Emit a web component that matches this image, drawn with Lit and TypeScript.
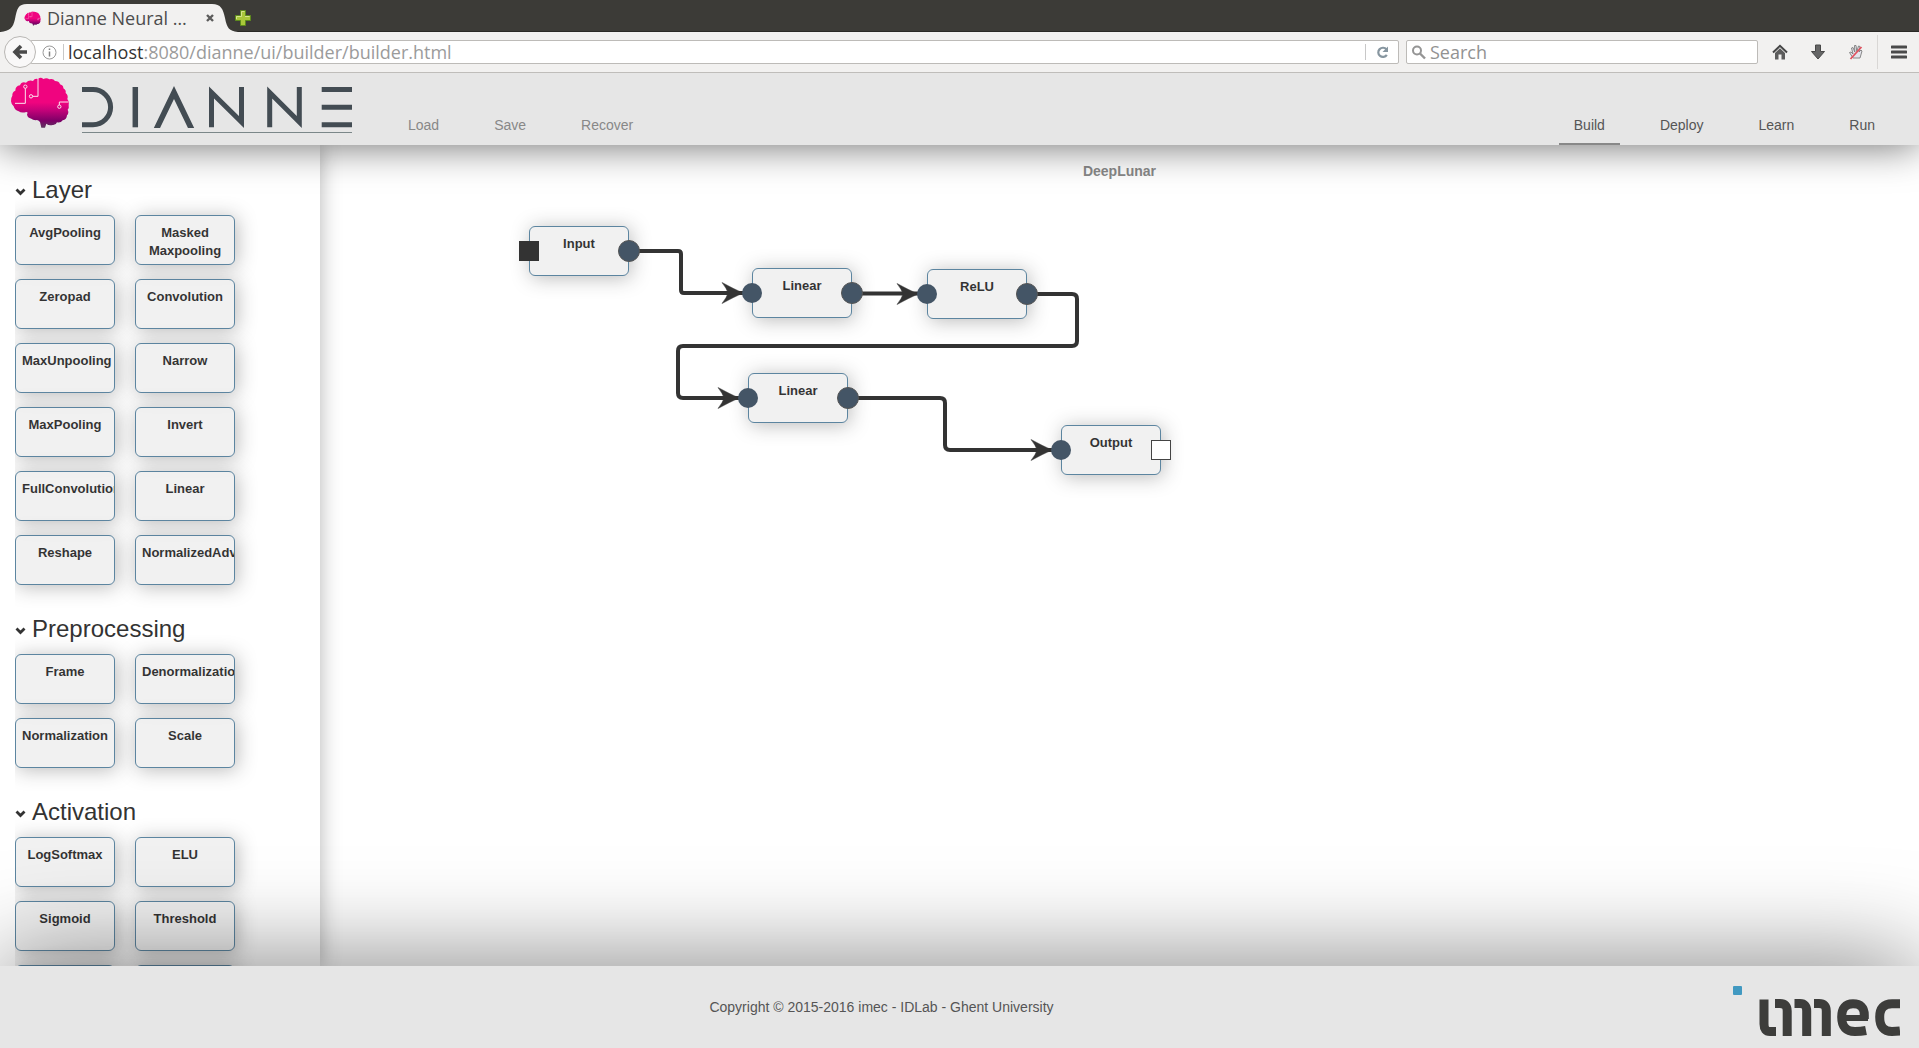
import { LitElement, html, svg, css } from "lit";
import { customElement, property, state } from "lit/decorators.js";
import { classMap } from "lit/directives/class-map.js";
import { styleMap } from "lit/directives/style-map.js";

type Port = "circle" | "source" | "sink";

interface GraphNode {
  label: string;
  x: number;
  y: number;
  input: Port;
  output: Port;
}

const GROUPS: { title: string; items: string[] }[] = [
  {
    title: "Layer",
    items: [
      "AvgPooling", "Masked Maxpooling", "Zeropad", "Convolution", "MaxUnpooling", "Narrow",
      "MaxPooling", "Invert", "FullConvolution", "Linear", "Reshape", "NormalizedAdv",
    ],
  },
  { title: "Preprocessing", items: ["Frame", "Denormalization", "Normalization", "Scale"] },
  { title: "Activation", items: ["LogSoftmax", "ELU", "Sigmoid", "Threshold", "Softmax", "Tanh"] },
];

const NODES: GraphNode[] = [
  { label: "Input", x: 209, y: 81, input: "source", output: "circle" },
  { label: "Linear", x: 432, y: 123, input: "circle", output: "circle" },
  { label: "ReLU", x: 607, y: 124, input: "circle", output: "circle" },
  { label: "Linear", x: 428, y: 228, input: "circle", output: "circle" },
  { label: "Output", x: 741, y: 280, input: "circle", output: "sink" },
];

const WIRES = [
  "M309 106 H358 Q361 106 361 109 V145 Q361 148 364 148 H424",
  "M532 148.500 H599",
  "M707 149 H752 Q757 149 757 154 V196 Q757 201 752 201 H363 Q358 201 358 206 V248 Q358 253 363 253 H420",
  "M528 253 H620 Q625 253 625 258 V300 Q625 305 630 305 H733",
];

const ARROWS: [number, number][] = [[422, 148], [597, 149], [418, 253], [731, 305]];

const BRAIN =
  "M33 94 Q32 84 37 77 Q36 66 46 62 Q46 48 60 46 Q64 34 78 38 Q86 29 99 33 Q104 24 114 27 " +
  "Q122 20 130 27 Q140 22 148 28 Q160 25 165 33 Q177 33 180 43 Q191 46 190 55 Q199 60 197 69 " +
  "Q206 76 202 87 Q209 95 206 104 Q208 113 203 119 Q208 129 201 136 Q200 149 188 151 " +
  "Q182 160 171 157 Q168 166 158 165 Q146 168 139 161 L135 173 H124 L120 156 " +
  "Q113 148 107 151 Q98 150 94 146 Q82 144 81 133 Q85 126 79 126 Q64 130 56 124 Q44 121 41 109 Q34 104 33 94 Z";

const brain = (id: string) => svg`
  <defs>
    <linearGradient id=${id} x1="0" y1="20" x2="0" y2="174" gradientUnits="userSpaceOnUse">
      <stop offset="0.5" stop-color="#f0047f"></stop>
      <stop offset="0.64" stop-color="#c9027a"></stop>
      <stop offset="0.86" stop-color="#7d0067"></stop>
      <stop offset="1" stop-color="#5b3a5e"></stop>
    </linearGradient>
  </defs>
  <path d=${BRAIN} fill="url(#${id})"></path>
  <g fill="none" stroke="#fbe3ee" stroke-width="3">
    <circle cx="76" cy="50" r="5"></circle>
    <path d="M76 55 V100 H45"></path>
    <circle cx="93" cy="79" r="5"></circle>
    <path d="M98 79 H114 V26"></path>
    <circle cx="178" cy="110" r="5"></circle>
    <path d="M178 105 V96 H206"></path>
  </g>`;

@customElement("browser-chrome")
export class BrowserChrome extends LitElement {
  static styles = css`
    :host {
      display: block;
      font-family: "Open Sans", "Noto Sans", sans-serif;
      font-size: 16px;
      color: #4c4c4c;
    }
    button {
      display: grid;
      place-items: center;
      padding: 0;
      border: 0;
      background: none;
      color: inherit;
      font: inherit;
    }
    svg {
      display: block;
    }
    .strip {
      display: flex;
      align-items: flex-end;
      height: 32px;
      background: #3c3b37;
      box-shadow: inset 0 -1px #2a2926;
    }
    .tab {
      display: grid;
      width: 240px;
      height: 28px;
    }
    .tab > * {
      grid-area: 1 / 1;
    }
    .tabrow {
      display: flex;
      align-items: center;
      padding: 0 22px 0 24px;
    }
    .title {
      flex: 1;
      padding-left: 6px;
      font-size: 18px;
      line-height: 28px;
      white-space: nowrap;
    }
    .plus {
      height: 28px;
      margin-left: -6px;
    }
    .bar {
      display: flex;
      align-items: center;
      height: 40px;
      padding: 0 12px 0 4px;
      background: #f2f1f0;
      border-bottom: 1px solid #bfbdba;
    }
    .back {
      width: 32px;
      height: 32px;
      border: 1px solid #b9b7b4;
      border-radius: 50%;
      background: #f9f8f8;
      z-index: 1;
    }
    .field {
      box-sizing: border-box;
      display: flex;
      align-items: center;
      height: 24px;
      border: 1px solid #bdbbb8;
      border-radius: 2px;
      background: #fff;
    }
    .url {
      flex: 1;
      margin-left: -6px;
      padding-left: 11px;
    }
    .search {
      width: 352px;
      margin: 0 11px 0 7px;
      padding-left: 4px;
    }
    .rule {
      width: 1px;
      height: 16px;
      background: #c8c8c8;
    }
    .info {
      margin-right: 6px;
    }
    .address {
      flex: 1;
      display: flex;
      padding-left: 4px;
      font-size: 18px;
      line-height: 22px;
      color: #9b9b9b;
      white-space: nowrap;
    }
    .host {
      color: #333;
    }
    .reload {
      width: 32px;
      height: 22px;
    }
    input {
      flex: 1;
      min-width: 0;
      padding: 0 0 0 4px;
      border: 0;
      outline: 0;
      background: none;
      font: inherit;
      font-size: 18px;
      line-height: 22px;
    }
    input::placeholder {
      color: #929292;
      opacity: 1;
    }
    .tools {
      display: flex;
      gap: 16px;
      padding-right: 10px;
    }
    .tool {
      width: 22px;
      height: 24px;
    }
    .divider {
      width: 1px;
      height: 34px;
      background: #d9d7d5;
      margin-right: 13px;
    }
  `;

  render() {
    return html`
      <div class="strip">
        <div class="tab">
          <svg width="240" height="28" viewBox="0 0 240 28" aria-hidden="true">
            <path d="M0 28 C10 27 13 24 15 15 C17 5 18 0 27 0 H212 C221 0 223 5 225 14 C227 24 229 27 238 28 Z" fill="#f2f1f0"></path>
          </svg>
          <div class="tabrow">
            <svg width="17" height="17" viewBox="28 18 182 160" aria-hidden="true">${brain("tab-brain")}</svg>
            <span class="title">Dianne Neural …</span>
            <button aria-label="Close tab">
              <svg width="16" height="16" viewBox="0 0 16 16">
                <path d="M5 5 L11 11 M11 5 L5 11" stroke="#5c5c5c" stroke-width="2.4"></path>
              </svg>
            </button>
          </div>
        </div>
        <button class="plus" aria-label="New tab">
          <svg width="18" height="18" viewBox="0 0 18 18">
            <path d="M6.500 1.500 H11.500 V6.500 H16.500 V11.500 H11.500 V16.500 H6.500 V11.500 H1.500 V6.500 H6.500 Z" fill="#a9c83a" stroke="#5d8a1c"></path>
            <path d="M7.500 7.500 V2.500 H10.500 M2.500 10 V7.500 H7.500 M11 7.500 H15.500" fill="none" stroke="#d5e48c"></path>
          </svg>
        </button>
      </div>
      <div class="bar">
        <button class="back" aria-label="Back">
          <svg width="16" height="16" viewBox="0 0 16 16">
            <path d="M9 2 L3 8 L9 14 M3.500 8 H15" fill="none" stroke="#4a4a4a" stroke-width="3.600"></path>
          </svg>
        </button>
        <div class="field url">
          <svg class="info" width="15" height="15" viewBox="0 0 15 15" aria-hidden="true">
            <circle cx="7.500" cy="7.500" r="6.500" fill="none" stroke="#9a9a9a"></circle>
            <path d="M7.500 3.500 V5 M7.500 6.500 V11.500" stroke="#808080" stroke-width="1.500"></path>
          </svg>
          <span class="rule"></span>
          <span class="address"><span class="host">localhost</span>:8080/dianne/ui/builder/builder.html</span>
          <span class="rule"></span>
          <button class="reload" aria-label="Reload">
            <svg width="13" height="13" viewBox="0 0 13 13">
              <path d="M10.500 3.500 A4.600 4.600 0 1 0 10.800 8.800" fill="none" stroke="#8796a0" stroke-width="2.200"></path>
              <path d="M12 0.500 V6 H6.500 Z" fill="#8796a0"></path>
            </svg>
          </button>
        </div>
        <label class="field search">
          <svg width="15" height="15" viewBox="0 0 15 15" aria-hidden="true">
            <circle cx="6" cy="5.500" r="4" fill="none" stroke="#959595" stroke-width="2"></circle>
            <path d="M9 8.500 L14 13.500" stroke="#959595" stroke-width="2.400"></path>
          </svg>
          <input type="text" placeholder="Search" aria-label="Search" />
        </label>
        <div class="tools">
          <button class="tool" aria-label="Home">
            <svg width="16" height="16" viewBox="0 0 16 16">
              <path d="M1 8.500 L8 1.800 L15 8.500" fill="none" stroke="#454545" stroke-width="2"></path>
              <path d="M3 9 L8 4.200 L13 9 V15.500 H9.500 V10.500 H6.500 V15.500 H3 Z" fill="#5c5c5c"></path>
            </svg>
          </button>
          <button class="tool" aria-label="Downloads">
            <svg width="16" height="16" viewBox="0 0 16 16">
              <path d="M5.500 1 H10.500 V7.500 H14.500 L8 15 L1.500 7.500 H5.500 Z" fill="#666" stroke="#484848"></path>
            </svg>
          </button>
          <button class="tool" aria-label="Blocker">
            <svg width="16" height="16" viewBox="0 0 16 16">
              <path d="M5 14 L1.500 8.500 L3 8 L5 10 L3.500 4 L5 3.500 L6.800 8 L6.500 1.500 H8 L8.800 7.500 L10.500 2 L12 2.500 L11 8 L13 6 L14 7 L12 14 Z" fill="#e4e4ec" stroke="#7d7d7d" stroke-width="0.900"></path>
              <path d="M2.500 15 L13.500 3" stroke="#e0525f" stroke-width="1.800"></path>
            </svg>
          </button>
        </div>
        <span class="divider"></span>
        <button aria-label="Menu">
          <svg width="16" height="14" viewBox="0 0 16 14">
            <path d="M1 2 H15 M1 7 H15 M1 12 H15" stroke="#4a4a4a" stroke-width="3" stroke-linecap="round"></path>
          </svg>
        </button>
      </div>
    `;
  }
}

@customElement("module-box")
export class ModuleBox extends LitElement {
  @property() label = "";

  static styles = css`
    :host {
      display: block;
      width: 100px;
      height: 50px;
    }
    .box {
      box-sizing: border-box;
      width: 100%;
      height: 100%;
      padding: 8px 6px 0;
      border: 1px solid #346789;
      border-radius: 6px;
      background: #eee;
      box-shadow: 2px 2px 19px #aaa;
      opacity: 0.8;
      overflow: hidden;
      color: #000;
      font: bold 13px/18px "Liberation Sans", Arial, sans-serif;
      text-align: center;
      cursor: move;
    }
  `;

  render() {
    return html`<div class="box">${this.label}</div>`;
  }
}

@customElement("app-root")
export class AppRoot extends LitElement {
  @state() private mode = "Build";
  @state() private closed: string[] = [];

  static styles = css`
    :host {
      display: flex;
      flex-direction: column;
      height: 100vh;
      overflow: hidden;
      background: #fff;
      color: #333;
      font: 14px/20px "Liberation Sans", Arial, sans-serif;
    }
    svg {
      display: block;
    }
    .chrome {
      z-index: 3;
    }
    .header {
      display: flex;
      align-items: flex-end;
      height: 72px;
      padding: 0 29px 0 10px;
      background: #e6e6e6;
      box-shadow: 0 0 40px rgba(0, 0, 0, 0.6);
      z-index: 2;
    }
    .brand {
      display: flex;
      align-self: flex-start;
      gap: 12px;
      padding-top: 3px;
    }
    .menu {
      display: flex;
      gap: 25px;
    }
    .actions {
      flex: 1;
      padding-left: 41px;
    }
    .item {
      padding: 12px 15px 8px;
      border: 0;
      border-bottom: 2px solid transparent;
      background: none;
      color: #555;
      font: inherit;
      text-decoration: none;
    }
    .actions .item {
      color: #888;
    }
    .item.active {
      border-bottom-color: #888;
    }
    .main {
      flex: 1;
      display: flex;
      min-height: 0;
    }
    .sidebar {
      box-sizing: border-box;
      flex: none;
      width: 320px;
      overflow: hidden;
      padding: 1px 0 0 15px;
      background: #fff;
      box-shadow: 0 0 20px rgba(0, 0, 0, 0.3);
      z-index: 1;
    }
    .groups {
      overflow-x: clip;
    }
    .heading {
      margin: 0;
      padding: 28px 0 9px;
      font-size: 24px;
      font-weight: normal;
      line-height: 32px;
    }
    .toggle {
      display: flex;
      align-items: center;
      gap: 6px;
      padding: 0;
      border: 0;
      background: none;
      color: inherit;
      font: inherit;
    }
    .toggle svg {
      margin-top: 4px;
    }
    .closed svg {
      rotate: -90deg;
    }
    .grid {
      display: grid;
      grid-template-columns: 100px 100px;
      gap: 14px 20px;
    }
    .canvas {
      flex: 1;
      position: relative;
      min-width: 0;
      overflow: hidden;
    }
    .name {
      margin: 0;
      padding-top: 16px;
      color: #888;
      font-size: 14px;
      line-height: 20px;
      text-align: center;
    }
    .wires {
      position: absolute;
      inset: 0;
      width: 100%;
      height: 100%;
    }
    .node {
      position: absolute;
    }
    .footer {
      display: flex;
      align-items: center;
      height: 82px;
      padding: 0 19px 0 30px;
      background: #e6e6e6;
      box-shadow: 0 0 100px rgba(0, 0, 0, 0.55);
      z-index: 2;
    }
    .copyright {
      flex: 1;
      margin: 0;
      color: #555;
      text-align: center;
    }
    .imec {
      padding-top: 8px;
    }
  `;

  private toggle(title: string) {
    this.closed = this.closed.includes(title)
      ? this.closed.filter((t) => t !== title)
      : [...this.closed, title];
  }

  private port(kind: Port, cx: number, cy: number, outgoing: boolean) {
    if (kind === "source") {
      return svg`<rect x=${cx - 10} y=${cy - 10} width="20" height="20" fill="#333"></rect>`;
    }
    if (kind === "sink") {
      return svg`<rect x=${cx - 9.5} y=${cy - 9.5} width="19" height="19" fill="#fff" stroke="#444"></rect>`;
    }
    return outgoing
      ? svg`<circle cx=${cx} cy=${cy} r="10.5" fill="#456" stroke="#555"></circle>`
      : svg`<circle cx=${cx} cy=${cy} r="10" fill="#456"></circle>`;
  }

  private brand() {
    return html`
      <a class="brand" href="#" aria-label="Dianne">
        <svg width="60" height="53" viewBox="30 18 180 159">${brain("logo-brain")}</svg>
        <svg width="270" height="58" viewBox="82 76 270 58" fill="none" stroke="#434c53" stroke-width="5">
          <clipPath id="band"><rect x="82" y="86" width="270" height="42"></rect></clipPath>
          <g clip-path="url(#band)">
            <path d="M82 89.500 H93 A17.600 17.600 0 0 1 93 124.700 H82"></path>
            <path d="M135.300 87 V127.300" stroke-width="5.500"></path>
            <path d="M155 132 L174 92.500 L193 132" stroke-width="5.600"></path>
            <path d="M211.500 127.300 V92.500 L241.500 122 V87"></path>
            <path d="M269.700 127.300 V92.500 L299.300 122 V87"></path>
            <path d="M321.700 89.500 H352 M321.700 107.200 H352 M321.700 124.800 H352"></path>
          </g>
          <path d="M82 132.500 H352" stroke="#7b8789" stroke-width="1"></path>
        </svg>
      </a>
    `;
  }

  render() {
    return html`
      <browser-chrome class="chrome"></browser-chrome>
      <header class="header">
        ${this.brand()}
        <nav class="menu actions" aria-label="File">
          ${["Load", "Save", "Recover"].map((a) => html`<button class="item">${a}</button>`)}
        </nav>
        <nav class="menu" aria-label="Mode">
          ${["Build", "Deploy", "Learn", "Run"].map(
            (m) => html`<a
              href="#${m.toLowerCase()}"
              class=${classMap({ item: true, active: m === this.mode })}
              @click=${() => (this.mode = m)}
              >${m}</a
            >`
          )}
        </nav>
      </header>
      <main class="main">
        <aside class="sidebar">
          <div class="groups">
            ${GROUPS.map((g) => {
              const closed = this.closed.includes(g.title);
              return html`
                <section>
                  <h2 class="heading">
                    <button
                      class=${classMap({ toggle: true, closed })}
                      aria-expanded=${closed ? "false" : "true"}
                      @click=${() => this.toggle(g.title)}
                    >
                      <svg width="11" height="8" viewBox="0 0 11 8">
                        <path d="M1.500 1.500 L5.500 5.500 L9.500 1.500" fill="none" stroke="#333" stroke-width="2.800"></path>
                      </svg>
                      ${g.title}
                    </button>
                  </h2>
                  ${closed
                    ? null
                    : html`<div class="grid">
                        ${g.items.map((i) => html`<module-box label=${i}></module-box>`)}
                      </div>`}
                </section>
              `;
            })}
          </div>
        </aside>
        <section class="canvas">
          <h1 class="name">DeepLunar</h1>
          ${NODES.map(
            (n) => html`<module-box
              class="node"
              label=${n.label}
              style=${styleMap({ left: `${n.x}px`, top: `${n.y}px` })}
            ></module-box>`
          )}
          <svg class="wires" aria-hidden="true">
            ${WIRES.map((d) => svg`<path d=${d} fill="none" stroke="#333" stroke-width="4"></path>`)}
            ${ARROWS.map(
              ([x, y]) =>
                svg`<path d="M${x + 1} ${y} Q${x - 8} ${y - 4} ${x - 20} ${y - 10.5} Q${x - 15} ${y - 4} ${x - 14} ${y} Q${x - 15} ${y + 4} ${x - 20} ${y + 10.5} Q${x - 8} ${y + 4} ${x + 1} ${y} Z" fill="#333" stroke="#333" stroke-width="0.500"></path>`
            )}
            ${NODES.map((n) => [
              this.port(n.input, n.x, n.y + 25, false),
              this.port(n.output, n.x + 100, n.y + 25, true),
            ])}
          </svg>
        </section>
      </main>
      <footer class="footer">
        <p class="copyright">Copyright © 2015-2016 imec - IDLab - Ghent University</p>
        <svg class="imec" width="167" height="50" viewBox="0 0 167 50" fill="none" stroke="#3d3d3b" stroke-width="9" role="img" aria-label="imec">
          <rect width="9" height="9" rx="1" fill="#4199c1" stroke="none"></rect>
          <path d="M31 13.500 V38 Q31 45.500 37 45.500 H43"></path>
          <path d="M42 17.500 H47 Q54.200 17.500 54.200 25 V50"></path>
          <path d="M61.500 17.500 H67 Q73.700 17.500 73.700 25 V50"></path>
          <path d="M81 17.500 H86 Q93.300 17.500 93.300 25 V50"></path>
          <path d="M131.300 33 V29 Q131.300 17.800 120 17.800 Q108.700 17.800 108.700 31 Q108.700 45.500 122 45.500 Q128 45.500 133 44.500"></path>
          <path d="M108 32 H135" stroke-width="6"></path>
          <path d="M167 17.800 H159 Q146.700 17.800 146.700 31 Q146.700 45.500 159 45.500 Q163 45.500 167 45"></path>
        </svg>
      </footer>
    `;
  }
}
